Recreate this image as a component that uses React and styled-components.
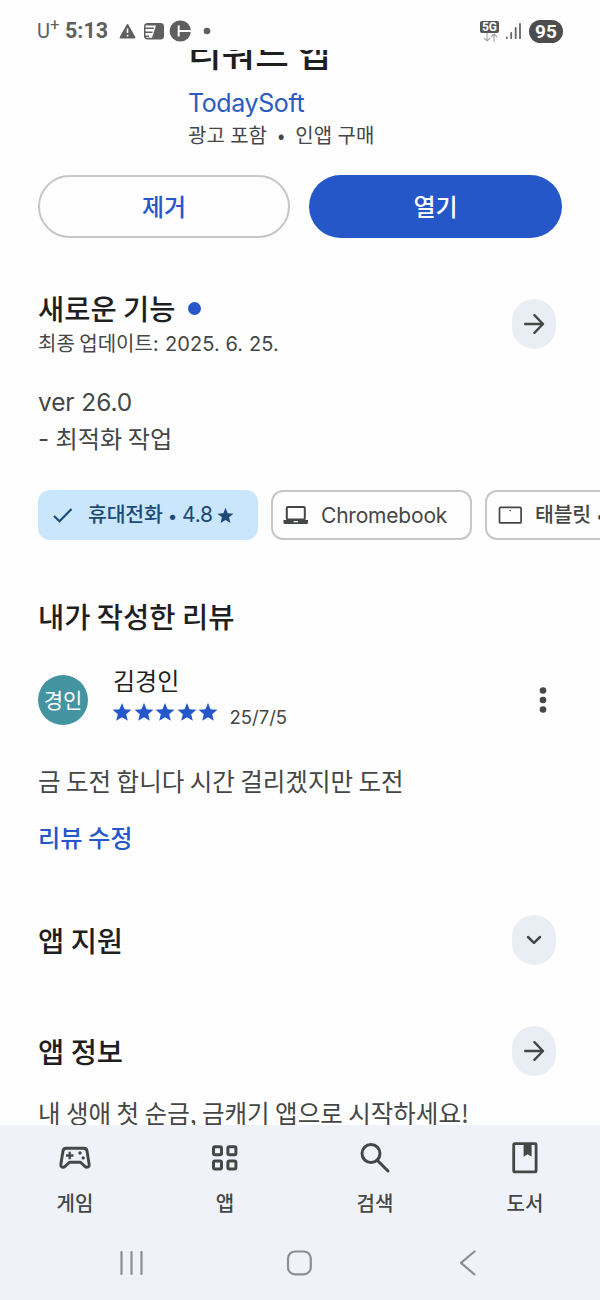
import React from 'react';
import styled, { createGlobalStyle } from 'styled-components';

const STAR = 'M12 1.2l3.100 7.600 8.200.6-6.300 5.200 2 8L12 18.200l-7 4.400 2-8L.7 9.400l8.200-.6z';

const Star = ({ size }) => (
    <svg width={size} height={size} viewBox="0 0 24 24" fill="currentColor"><path d={STAR} /></svg>
);

const ArrowIcon = () => (
    <svg width="24" height="24" viewBox="0 0 24 24" fill="none" stroke="#444746" strokeWidth="2.4" strokeLinecap="round" strokeLinejoin="round">
        <path d="M3.200 12H21M12.400 3.200L21 12l-8.600 8.800" />
    </svg>
);

const ChevronIcon = () => (
    <svg width="24" height="24" viewBox="0 0 24 24" fill="none" stroke="#444746" strokeWidth="2.5" strokeLinecap="round" strokeLinejoin="round">
        <path d="M6 9l6 5.800L18 9" />
    </svg>
);

const GameIcon = () => (
    <svg width="34" height="34" viewBox="0 0 34 34" fill="none" stroke="#444746" strokeWidth="2.9" strokeLinejoin="round">
        <path d="M8.200 7.300h17.600c2 0 3 1.200 3.200 2.800l2.200 13.300c.4 2.500-2.300 3.800-4 2.200L22.500 21.300h-11L6.800 25.600c-1.700 1.600-4.400.3-4-2.200L5 10.100c.2-1.600 1.200-2.800 3.200-2.800z" />
        <path d="M8 14.500h7.400M11.700 10.800v7.400" strokeWidth="2.3" />
        <circle cx="22" cy="12" r="1.700" fill="#444746" stroke="none" />
        <circle cx="25.200" cy="16.900" r="1.700" fill="#444746" stroke="none" />
    </svg>
);

const AppsIcon = () => (
    <svg width="34" height="34" viewBox="0 0 34 34" fill="none" stroke="#444746" strokeWidth="3">
        <rect x="5.500" y="5.700" width="8" height="8" rx="1.500" />
        <rect x="19.900" y="5.700" width="8" height="8" rx="1.500" />
        <rect x="5.500" y="19.900" width="8" height="8" rx="1.500" />
        <rect x="19.900" y="19.900" width="8" height="8" rx="1.500" />
    </svg>
);

const SearchIcon = () => (
    <svg width="34" height="34" viewBox="0 0 34 34" fill="none" stroke="#444746" strokeWidth="3" strokeLinecap="round">
        <circle cx="13" cy="12.500" r="9" />
        <path d="M19.500 19.500l10.500 10.500" />
    </svg>
);

const BookIcon = () => (
    <svg width="34" height="34" viewBox="0 0 34 34" fill="none" stroke="#444746" strokeWidth="2.8" strokeLinejoin="round">
        <rect x="5.700" y="2.700" width="22.400" height="28.200" rx="1" />
        <path d="M15.600 3h8v12.800l-4-2.600-4 2.600z" fill="#444746" stroke="none" />
    </svg>
);

const NAV = [
    ['게임', GameIcon],
    ['앱', AppsIcon],
    ['검색', SearchIcon],
    ['도서', BookIcon],
];

const App = () => {
    return (
        <Screen>
            <GlobalStyle />
            <StatusBar>
                <StatusGroup>
                    <Carrier>U<sup>+</sup></Carrier>
                    <Clock>5:13</Clock>
                    <svg width="94" height="24" viewBox="0 0 94 24" fill="#5f5f5f">
                        <path d="M9.500 6L16.500 18.500H2.500z" stroke="#5f5f5f" strokeWidth="1.8" strokeLinejoin="round" />
                        <path d="M9.500 9.500v4.500M9.500 15.700v1.800" stroke="#fff" strokeWidth="1.6" />
                        <rect x="26" y="4" width="20" height="16.500" rx="3.500" />
                        <path d="M27.500 6.500H38l-4 12.300h-5a1.500 1.500 0 0 1-1.500-1.500z" fill="#fff" />
                        <path d="M26.500 9.300h9.300M26.500 13.300h8M26.500 17.300h4.500" stroke="#5f5f5f" strokeWidth="1.5" />
                        <circle cx="62.300" cy="12" r="10.600" />
                        <path d="M60.700 6.500v11M60.700 12H74" stroke="#fff" strokeWidth="2" />
                        <circle cx="89" cy="12" r="3.300" />
                    </svg>
                </StatusGroup>
                <StatusGroup>
                    <Network>
                        <NetworkBadge>5G</NetworkBadge>
                        <svg width="16" height="9" viewBox="0 0 16 9" fill="none" stroke="#aaa" strokeWidth="1.2">
                            <path d="M5 0v8M1.800 5L5 8l3.200-3M12 9V1M8.800 4L12 1l3.200 3" />
                        </svg>
                    </Network>
                    <svg width="18" height="18" viewBox="0 0 18 18" stroke="#666" strokeWidth="1.8" strokeLinecap="round">
                        <path d="M1.800 15.500v.7M6.200 11v5.200M10.700 6v10.200M15 2v14.200" />
                    </svg>
                    <Battery>95</Battery>
                </StatusGroup>
            </StatusBar>

            <Content>
                <AppHeader>
                    <AppTitle>리워드 앱</AppTitle>
                    <Developer>TodaySoft</Developer>
                    <Notice>광고 포함&nbsp; •&nbsp; 인앱 구매</Notice>
                </AppHeader>
                <Actions>
                    <Button>제거</Button>
                    <Button $primary>열기</Button>
                </Actions>

                <SectionHeader $top={52}>
                    <div>
                        <Heading>새로운 기능<UpdateDot /></Heading>
                        <Updated>최종 업데이트: <Digits>2025. 6. 25.</Digits></Updated>
                    </div>
                    <RoundButton><ArrowIcon /></RoundButton>
                </SectionHeader>
                <Changes>
                    <Version>ver 26.0</Version>
                    <Body><Dash>-</Dash> 최적화 작업</Body>
                </Changes>

                <Chips>
                    <Chip $width={220} $active>
                        <svg width="22" height="22" viewBox="0 0 22 22" fill="none" stroke="currentColor" strokeWidth="2.2"><path d="M1 12l5.500 5.200L18.500 5" /></svg>
                        <ChipLabel $left={13}><b>휴대전화</b><Bullet>•</Bullet>4.8</ChipLabel>
                        <ChipStar><Star size={17} /></ChipStar>
                    </Chip>
                    <Chip $width={201}>
                        <svg width="26" height="22" viewBox="0 0 26 22">
                            <rect x="3.800" y="2.900" width="18" height="12.500" rx="1" fill="none" stroke="currentColor" strokeWidth="2" />
                            <path d="M.5 16h24.500v2.800c0 .7-.4 1.100-1 1.100h-22.500c-.6 0-1-.4-1-1.100z" fill="currentColor" />
                            <path d="M10.500 17.700h4.500" stroke="#fff" strokeWidth="1.2" />
                        </svg>
                        <ChipLabel $left={12}>Chromebook</ChipLabel>
                    </Chip>
                    <Chip $width={220}>
                        <svg width="26" height="22" viewBox="0 0 26 22">
                            <rect x="2.500" y="3.300" width="21.600" height="15.600" rx="1" fill="none" stroke="currentColor" strokeWidth="1.7" />
                            <circle cx="13.300" cy="6.500" r=".8" fill="currentColor" />
                        </svg>
                        <ChipLabel $left={12}><b>태블릿</b><Bullet>•</Bullet></ChipLabel>
                    </Chip>
                </Chips>

                <ReviewHeading>내가 작성한 리뷰</ReviewHeading>
                <Reviewer>
                    <Avatar>경인</Avatar>
                    <ReviewerInfo>
                        <Name>김경인</Name>
                        <Rating>
                            {[1, 2, 3, 4, 5].map((n) => <Star key={n} size={20} />)}
                            <ReviewDate>25/7/5</ReviewDate>
                        </Rating>
                    </ReviewerInfo>
                    <svg width="8" height="30" viewBox="0 0 8 30" fill="#444746">
                        <circle cx="4" cy="5.500" r="3.300" />
                        <circle cx="4" cy="15" r="3.300" />
                        <circle cx="4" cy="24.500" r="3.300" />
                    </svg>
                </Reviewer>
                <ReviewText>금 도전 합니다 시간 걸리겠지만 도전</ReviewText>
                <EditLink>리뷰 수정</EditLink>

                <SectionHeader $top={60}>
                    <Heading>앱 지원</Heading>
                    <RoundButton><ChevronIcon /></RoundButton>
                </SectionHeader>
                <SectionHeader $top={61}>
                    <Heading>앱 정보</Heading>
                    <RoundButton><ArrowIcon /></RoundButton>
                </SectionHeader>
                <About>내 생애 첫 순금, 금캐기 앱으로 시작하세요!</About>
            </Content>

            <BottomBar>
                <Tabs>
                    {NAV.map(([label, Icon]) => (
                        <Tab key={label}>
                            <Icon />
                            <TabLabel>{label}</TabLabel>
                        </Tab>
                    ))}
                </Tabs>
                <SystemBar>
                    <svg width="28" height="28" viewBox="0 0 28 28" stroke="#8b8e93" strokeWidth="2.2" strokeLinecap="round"><path d="M4.500 3v22M14.500 3v22M24.500 3v22" /></svg>
                    <svg width="28" height="28" viewBox="0 0 28 28" fill="none" stroke="#8b8e93" strokeWidth="2.2"><rect x="2" y="2.500" width="22.800" height="22.800" rx="7" /></svg>
                    <svg width="28" height="28" viewBox="0 0 28 28" fill="none" stroke="#8b8e93" strokeWidth="2.2" strokeLinecap="round" strokeLinejoin="round"><path d="M20.500 2.500L7 13.800l13.500 11.700" /></svg>
                </SystemBar>
            </BottomBar>
        </Screen>
    );
};

export default App;

const GlobalStyle = createGlobalStyle`
* {
    box-sizing: border-box;
}
body {
    margin: 0;
    background: #fefefe;
}
svg {
    display: block;
    flex: none;
}
`
const Screen = styled.div`
width: 600px;
height: 1300px;
display: flex;
flex-direction: column;
overflow: hidden;
white-space: nowrap;
color: #444746;
font-family: "Noto Sans CJK KR", sans-serif;
`
const StatusBar = styled.div`
height: 50px;
flex: none;
display: flex;
justify-content: space-between;
padding: 12px 37px 0 37px;
color: #5f5f5f;
`
const StatusGroup = styled.div`
display: flex;
align-items: center;
height: 38px;
`
const Carrier = styled.span`
width: 28px;
font: 20px/38px Roboto, sans-serif;
sup {
    font-size: 17px;
    line-height: 0;
}
`
const Clock = styled.span`
width: 53px;
font: 700 21.5px/38px Roboto, sans-serif;
`
const Network = styled.div`
display: flex;
flex-direction: column;
align-items: center;
margin-right: 6px;
`
const NetworkBadge = styled.span`
width: 19px;
border-radius: 2px;
background: #555;
color: #fff;
text-align: center;
font: 700 12px/12px Roboto, sans-serif;
`
const Battery = styled.span`
width: 34px;
height: 23px;
margin-left: 6px;
border-radius: 12px;
background: #4d4d4d;
color: #fff;
text-align: center;
font: 700 19px/24px Roboto, sans-serif;
`
const Content = styled.main`
height: 1075px;
flex: none;
overflow: hidden;
padding: 0 38px;
`
const AppHeader = styled.div`
margin: -18px 0 0 150px;
`
const AppTitle = styled.div`
color: #1f1f1f;
font-size: 36.5px;
font-weight: 500;
line-height: 40px;
`
const Developer = styled.div`
margin-top: 15px;
color: #2a5bbf;
font: 25px/32px Inter, sans-serif;
letter-spacing: -0.4px;
`
const Notice = styled.div`
margin-top: 3px;
font-size: 20px;
line-height: 25px;
word-spacing: 0.9px;
`
const Actions = styled.div`
display: grid;
grid-template-columns: 252px 253px;
gap: 19px;
margin-top: 28px;
`
const Button = styled.button`
height: 63px;
padding: 0 0 2px;
border: ${(p) => (p.$primary ? 'none' : '2px solid #c7c7c7')};
border-radius: 32px;
background: ${(p) => (p.$primary ? '#2657c9' : '#fefefe')};
color: ${(p) => (p.$primary ? '#fff' : '#2657c9')};
font: 500 24px/30px "Noto Sans CJK KR", sans-serif;
`
const SectionHeader = styled.div`
display: flex;
align-items: center;
justify-content: space-between;
margin-top: ${(p) => p.$top}px;
padding-right: 6px;
min-height: 50px;
`
const Heading = styled.h2`
display: flex;
align-items: center;
margin: 0;
color: #1f1f1f;
font-size: 28.5px;
font-weight: 500;
line-height: 36px;
`
const UpdateDot = styled.span`
width: 13px;
height: 13px;
margin-left: 12px;
border-radius: 50%;
background: #2657c9;
`
const Updated = styled.div`
margin-top: 5px;
padding-bottom: 2px;
font: 20px/24px "Noto Sans CJK KR", sans-serif;
`
const Digits = styled.span`
margin-left: 2px;
font: 20px/24px Inter, sans-serif;
letter-spacing: 0.1px;
`
const RoundButton = styled.span`
width: 44px;
height: 50px;
display: flex;
align-items: center;
justify-content: center;
border-radius: 22px;
background: #e9eef5;
`
const Changes = styled.div`
margin-top: 26px;
`
const Version = styled.div`
font: 24.5px/37px Inter, sans-serif;
letter-spacing: -0.1px;
`
const Body = styled.div`
margin-top: -2px;
font-size: 24.2px;
line-height: 37px;
`
const Dash = styled.span`
margin-right: 1px;
font-family: Inter, sans-serif;
`
const Chips = styled.div`
display: flex;
gap: 13px;
width: 700px;
margin-top: 32px;
`
const Chip = styled.div`
width: ${(p) => p.$width}px;
height: 50px;
display: flex;
align-items: center;
padding-left: ${(p) => (p.$active ? 15 : 10)}px;
border: ${(p) => (p.$active ? 'none' : '2px solid #c7c7c7')};
border-radius: 12px;
background: ${(p) => (p.$active ? '#c9e6fd' : '#fefefe')};
color: ${(p) => (p.$active ? '#1d4a75' : '#444746')};
`
const ChipLabel = styled.span`
margin-left: ${(p) => p.$left}px;
padding-top: 1px;
font: 21px/30px Inter, "Noto Sans CJK KR", sans-serif;
letter-spacing: -0.2px;
b {
    font-weight: 500;
    font-size: 20.5px;
}
`
const Bullet = styled.span`
margin: 0 5px;
font-size: 17px;
`
const ChipStar = styled.span`
margin-left: 4px;
`
const ReviewHeading = styled(Heading)`
margin-top: 58px;
`
const Reviewer = styled.div`
display: flex;
align-items: center;
margin-top: 32px;
padding-right: 15px;
height: 68px;
`
const Avatar = styled.div`
width: 50px;
height: 50px;
border-radius: 50%;
background: #4394a0;
color: #fff;
text-align: center;
font-size: 21px;
line-height: 48px;
`
const ReviewerInfo = styled.div`
flex: 1;
align-self: flex-start;
margin: -1px 0 0 25px;
`
const Name = styled.div`
color: #1f1f1f;
font-size: 24px;
line-height: 30px;
`
const Rating = styled.div`
display: flex;
gap: 1.5px;
margin: 7px 0 0 -1px;
color: #2657c9;
`
const ReviewDate = styled.span`
margin: 4px 0 0 10px;
color: #444746;
font: 18.5px/22px Inter, sans-serif;
`
const ReviewText = styled.div`
margin-top: 29px;
font-size: 24.5px;
line-height: 36px;
`
const EditLink = styled.div`
margin-top: 20px;
color: #2657c9;
font-size: 24.2px;
font-weight: 500;
line-height: 36px;
`
const About = styled.div`
margin-top: 19px;
font-size: 24.5px;
line-height: 36px;
`
const BottomBar = styled.nav`
height: 175px;
background: #eff3f9;
`
const Tabs = styled.div`
display: grid;
grid-template-columns: repeat(4, 150px);
padding-top: 16px;
`
const Tab = styled.div`
display: flex;
flex-direction: column;
align-items: center;
`
const TabLabel = styled.span`
margin-top: 13px;
font-size: 20px;
font-weight: 500;
line-height: 30px;
`
const SystemBar = styled.div`
display: flex;
justify-content: space-between;
margin: 31px 118px 0 117px;
`
